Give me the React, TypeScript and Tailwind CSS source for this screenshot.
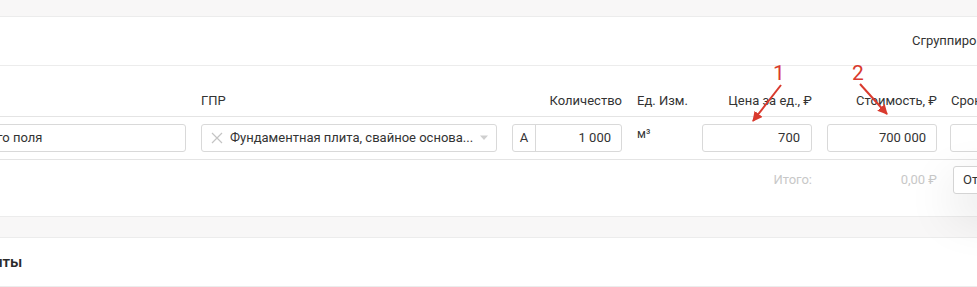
import React from 'react';

const font = { fontFamily: 'Roboto, "Noto Sans", sans-serif' };

const Arrows: React.FC = () => (
  <svg className="pointer-events-none absolute left-0 top-0" width="977" height="287">
    <defs>
      <marker id="head" viewBox="0 0 10 10" refX="9" refY="5" markerWidth="5" markerHeight="5" orient="auto">
        <path d="M0 0 L10 5 L0 10 z" fill="#d93a2e" />
      </marker>
    </defs>
    <text x="773" y="80" fill="#d93a2e" fontSize="21" fontFamily="Roboto, sans-serif">1</text>
    <text x="852" y="80" fill="#d93a2e" fontSize="21" fontFamily="Roboto, sans-serif">2</text>
    <line x1="781" y1="85" x2="753" y2="121" stroke="#d93a2e" strokeWidth="2" markerEnd="url(#head)" />
    <line x1="860" y1="84" x2="887" y2="114" stroke="#d93a2e" strokeWidth="2" markerEnd="url(#head)" />
  </svg>
);

const App: React.FC = () => {
  return (
    <div className="relative h-[287px] w-[977px] overflow-hidden bg-white text-[13px] text-[#333]" style={font}>
      <div className="h-[17px] border-b border-[#ececec] bg-[#f8f7f7]" />

      <div className="flex h-[49px] items-center border-b border-[#ececec]">
        <span className="ml-[912px] whitespace-nowrap text-[#333]">Сгруппировать по</span>
      </div>

      {/* header */}
      <div className="flex h-[51px] items-end gap-[15px] border-b border-[#e4e4e4] pb-[6px] -ml-[100px] whitespace-nowrap">
        <div className="w-[286px] shrink-0" />
        <div className="w-[296px] shrink-0">ГПР</div>
        <div className="w-[110px] shrink-0 text-right">Количество</div>
        <div className="w-[50px] shrink-0">Ед. Изм.</div>
        <div className="w-[110px] shrink-0 text-right">Цена за ед., ₽</div>
        <div className="w-[110px] shrink-0 text-right">Стоимость, ₽</div>
        <div className="w-[100px] shrink-0 -ml-[1px]">Срок</div>
      </div>

      {/* row */}
      <div className="flex h-[43px] items-start gap-[15px] border-b border-[#e4e4e4] pt-[7px] -ml-[100px] whitespace-nowrap">
        <div className="flex h-[28px] w-[286px] shrink-0 items-center rounded-[3px] border border-[#d9d9d9] pl-[96px]">го поля</div>
        <div className="flex h-[28px] w-[296px] shrink-0 items-center rounded-[3px] border border-[#d9d9d9] pl-[9px] pr-[7px]">
          <svg width="12" height="12" viewBox="0 0 12 12" className="mr-[7px] shrink-0">
            <path d="M1 1 L11 11 M11 1 L1 11" stroke="#c4c4c4" strokeWidth="1.2" />
          </svg>
          <span className="flex-1 overflow-hidden">Фундаментная плита, свайное основа...</span>
          <svg width="10" height="6" viewBox="0 0 10 6" className="ml-1 shrink-0">
            <path d="M1 0.5 L9 0.5 L5 5 z" fill="#cfcfcf" />
          </svg>
        </div>
        <div className="flex h-[28px] w-[110px] shrink-0 rounded-[3px] border border-[#d9d9d9]">
          <div className="flex w-[23px] items-center justify-center border-r border-[#d9d9d9]">A</div>
          <div className="flex flex-1 items-center justify-end pr-[10px]">1 000</div>
        </div>
        <div className="w-[50px] shrink-0 pt-[1px] text-[12px]">м³</div>
        <div className="flex h-[28px] w-[110px] shrink-0 items-center justify-end rounded-[3px] border border-[#d9d9d9] pr-[11px]">700</div>
        <div className="flex h-[28px] w-[110px] shrink-0 items-center justify-end rounded-[3px] border border-[#d9d9d9] pr-[10px]">700 000</div>
        <div className="h-[28px] w-[100px] shrink-0 -ml-[2px] rounded-[3px] border border-[#d9d9d9]" />
      </div>

      {/* total */}
      <div className="flex h-[57px] items-start gap-[15px] border-b border-[#ececec] -ml-[100px] whitespace-nowrap">
        <div className="w-[286px] shrink-0" />
        <div className="w-[296px] shrink-0" />
        <div className="w-[110px] shrink-0" />
        <div className="w-[50px] shrink-0" />
        <div className="w-[110px] shrink-0 pt-[10px] text-right text-[#c8c8c8]">Итого:</div>
        <div className="w-[110px] shrink-0 pt-[10px] text-right text-[#c8c8c8]">0,00 ₽</div>
        <div className="ml-[1px] mt-[6px] flex h-[28px] w-[100px] shrink-0 items-center rounded-[3px] border border-[#d4d4d4] bg-white pl-[9px] shadow-[0_18px_50px_rgba(0,0,0,0.14)]">
          От
        </div>
      </div>

      <div className="h-[21px] border-b border-[#ececec] bg-[#f8f7f7]" />

      <div className="flex h-[49px] items-center border-b border-[#ececec]">
        <span className="-ml-[61px] text-[15px] font-semibold text-[#2b2b2b]">Документы</span>
      </div>

      <Arrows />
    </div>
  );
};

export default App;
